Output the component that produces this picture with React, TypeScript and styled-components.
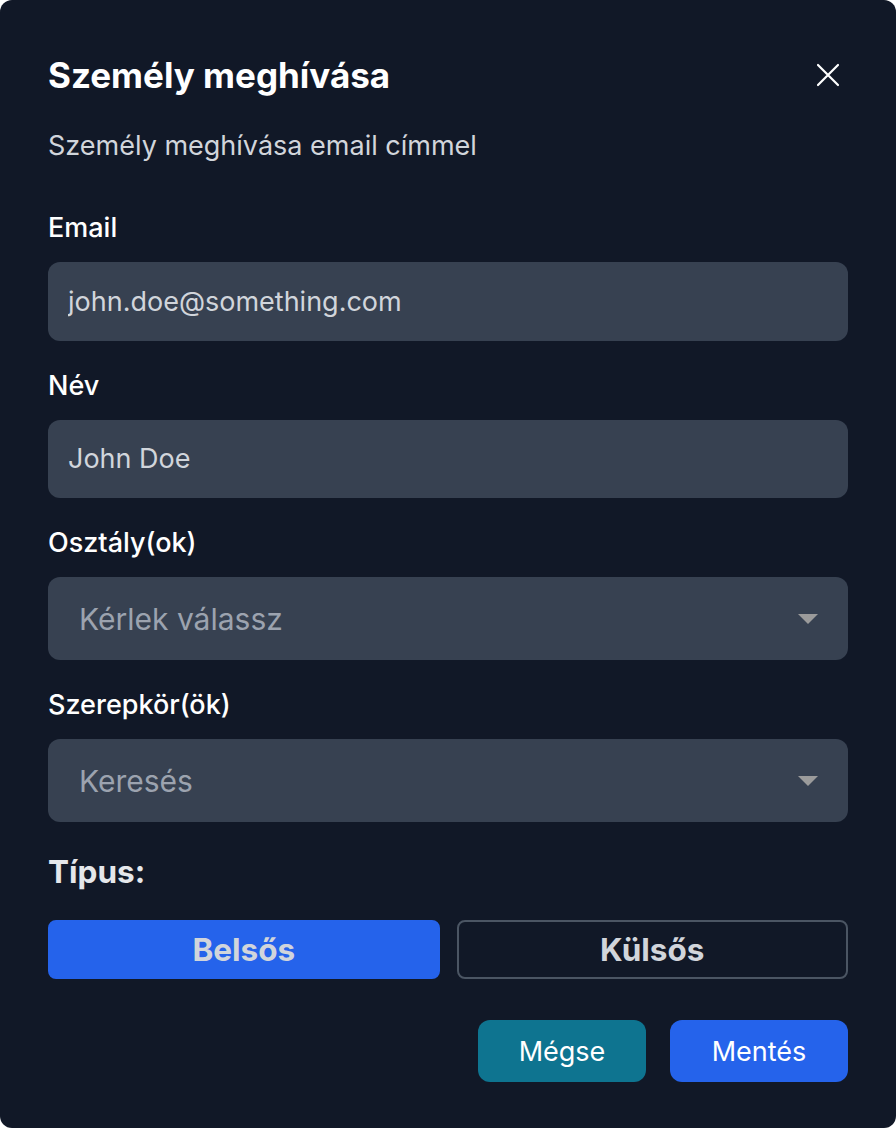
import { FC, ReactNode } from "react";
import styled, { createGlobalStyle } from "styled-components";

const GlobalStyle = createGlobalStyle`
  html, body {
    margin: 0;
    padding: 0;
    background: #ffffff;
  }
  body {
    font-family: Inter, "Noto Sans", "Liberation Sans", sans-serif;
  }
  * {
    box-sizing: border-box;
  }
`;

const Field: FC<{ label: string; children: ReactNode }> = ({ label, children }) => (
  <FieldGroup>
    <Label>{label}</Label>
    {children}
  </FieldGroup>
);

const App: FC = () => {
  return (
    <>
      <GlobalStyle />
      <Modal>
        <Header>
          <Title>Személy meghívása</Title>
          <CloseButton aria-label="Bezárás">
            <svg width="24" height="24" viewBox="0 0 24 24" fill="none">
              <path d="M2 2L22 22M22 2L2 22" stroke="#ffffff" strokeWidth="2.2" strokeLinecap="round" />
            </svg>
          </CloseButton>
        </Header>
        <Description>Személy meghívása email címmel</Description>

        <Form>
          <Field label="Email">
            <Input defaultValue="john.doe@something.com" />
          </Field>
          <Field label="Név">
            <Input defaultValue="John Doe" />
          </Field>
          <Field label="Osztály(ok)">
            <Select>
              <Placeholder>Kérlek válassz</Placeholder>
              <Caret />
            </Select>
          </Field>
          <Field label="Szerepkör(ök)">
            <Select>
              <Placeholder>Keresés</Placeholder>
              <Caret />
            </Select>
          </Field>
        </Form>

        <TypeLabel>Típus:</TypeLabel>
        <ToggleRow>
          <ToggleButton $active>Belsős</ToggleButton>
          <ToggleButton>Külsős</ToggleButton>
        </ToggleRow>

        <Footer>
          <ActionButton $variant="cancel">Mégse</ActionButton>
          <ActionButton $variant="save">Mentés</ActionButton>
        </Footer>
      </Modal>
    </>
  );
};

export default App;

const Modal = styled.div`
  width: 896px;
  height: 1128px;
  background: #111827;
  border-radius: 12px;
  padding: 56px 48px 47px;
  display: flex;
  flex-direction: column;
  overflow: hidden;
`;

const Header = styled.div`
  display: flex;
  align-items: center;
  justify-content: space-between;
  height: 38px;
`;

const Title = styled.h2`
  margin: 0;
  font-size: 35px;
  line-height: 38px;
  font-weight: 700;
  color: #ffffff;
`;

const CloseButton = styled.button`
  background: none;
  border: none;
  padding: 0;
  margin-right: 8px;
  width: 24px;
  height: 24px;
  display: flex;
  cursor: pointer;
`;

const Description = styled.p`
  margin: 36px 0 0;
  font-size: 27px;
  line-height: 32px;
  color: #d1d5db;
`;

const Form = styled.div`
  display: flex;
  flex-direction: column;
  gap: 29px;
  margin-top: 50px;
`;

const FieldGroup = styled.div`
  display: flex;
  flex-direction: column;
  gap: 18px;
`;

const Label = styled.label`
  font-size: 27px;
  line-height: 32px;
  font-weight: 500;
  color: #ffffff;
`;

const Input = styled.input`
  height: 78.5px;
  width: 100%;
  border: none;
  outline: none;
  border-radius: 12px;
  background: #374151;
  padding: 0 20px;
  font-family: inherit;
  font-size: 27px;
  color: #d1d5db;
`;

const Select = styled.div`
  height: 83px;
  border-radius: 12px;
  background: #374151;
  display: flex;
  align-items: center;
  justify-content: space-between;
  padding: 0 30px 0 31px;
`;

const Placeholder = styled.span`
  font-size: 30px;
  color: #9ca3af;
`;

const Caret = styled.span`
  width: 0;
  height: 0;
  border-left: 10px solid transparent;
  border-right: 10px solid transparent;
  border-top: 10px solid #9b9b9b;
`;

const TypeLabel = styled.div`
  margin-top: 32px;
  font-size: 31.5px;
  line-height: 36px;
  font-weight: 700;
  color: #e5e7eb;
`;

const ToggleRow = styled.div`
  display: grid;
  grid-template-columns: 1fr 1fr;
  gap: 17px;
  margin-top: 29.5px;
`;

const ToggleButton = styled.button<{ $active?: boolean }>`
  height: 59.5px;
  border-radius: 8px;
  font-family: inherit;
  font-size: 31.5px;
  font-weight: 700;
  color: #d1d5db;
  background: ${(p) => (p.$active ? "#2563eb" : "transparent")};
  border: 2px solid ${(p) => (p.$active ? "#2563eb" : "#4b5563")};
  cursor: pointer;
`;

const Footer = styled.div`
  display: flex;
  justify-content: flex-end;
  gap: 24px;
  margin-top: 41px;
`;

const ActionButton = styled.button<{ $variant: "cancel" | "save" }>`
  height: 62px;
  min-width: ${(p) => (p.$variant === "cancel" ? "168px" : "178px")};
  border: none;
  border-radius: 12px;
  font-family: inherit;
  font-size: 27px;
  font-weight: 400;
  color: #ffffff;
  background: ${(p) => (p.$variant === "cancel" ? "#0e7490" : "#2563eb")};
  cursor: pointer;
`;
